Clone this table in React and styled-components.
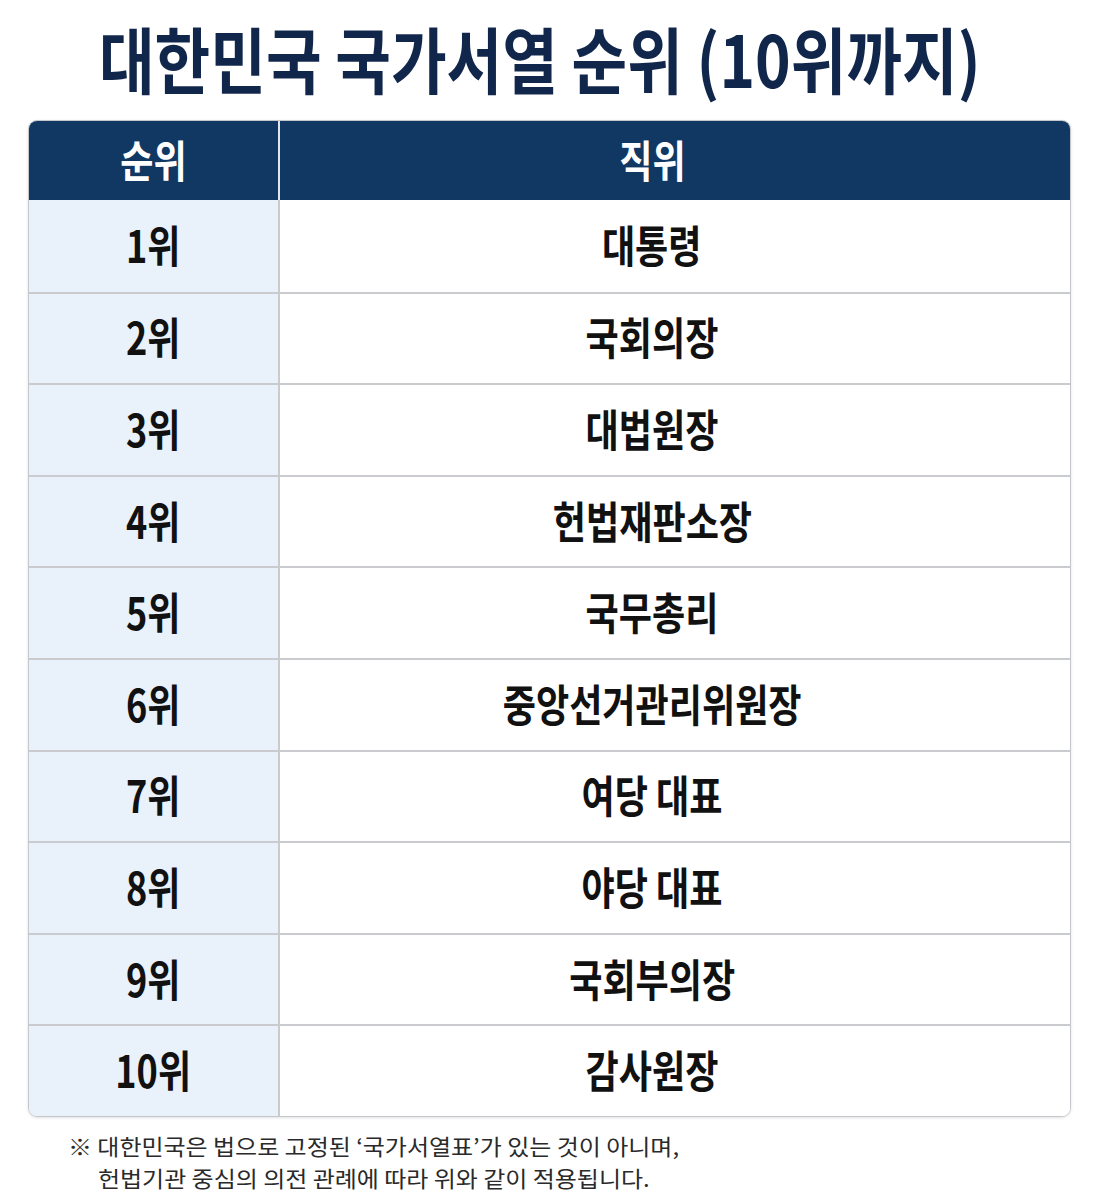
import React from 'react';
import styled, { createGlobalStyle } from 'styled-components';

const Global = createGlobalStyle`
  body {
    margin: 0;
    background: #ffffff;
    font-family: "Noto Sans CJK KR", "Noto Sans", sans-serif;
  }
`;

const Page = styled.div`
  width: 1097px;
  height: 1200px;
  box-sizing: border-box;
  padding: 14px 26px 0 28px;
  display: flex;
  flex-direction: column;
`;

// the source uses a narrow gothic face, so squeeze the text horizontally
const Squeeze = styled.span`
  display: inline-block;
  flex-shrink: 0;
  white-space: pre;
  transform: scaleX(${p => p.$x || 0.82});
  transform-origin: ${p => p.$origin || 'center'};
`;

const Title = styled.h1`
  margin: 0;
  height: 106px;
  padding-right: 20px;
  display: flex;
  justify-content: center;
  font-size: 72px;
  font-weight: 700;
  line-height: 86px;
  color: #10264a;
`;

const Table = styled.div`
  border: 1.5px solid #c4c7cc;
  border-radius: 9px;
  overflow: hidden;
  box-shadow: 0 1px 3px rgba(0, 0, 0, 0.12);
`;

const Row = styled.div`
  display: grid;
  grid-template-columns: 249px 1fr;
  box-sizing: border-box;
  height: ${p => (p.$head ? 79 : 91.6)}px;
  border-top: ${p => (p.$first ? 'none' : '2px solid #c9cbcf')};
`;

const Cell = styled.div`
  display: flex;
  align-items: center;
  justify-content: center;
  font-weight: 700;
  font-size: 44px;
  color: ${p => (p.$head ? '#ffffff' : '#111111')};
  background: ${p => (p.$head ? '#113863' : p.$rank ? '#e9f1fb' : '#ffffff')};
  border-left: ${p => (p.$rank ? 'none' : p.$head ? '2px solid #dfe6ef' : '2px solid #c9cbcf')};
  padding: 0 ${p => (p.$rank ? 0 : 46)}px 4px 0;
  box-sizing: border-box;
`;

const Note = styled.div`
  margin: 12px 0 0 40px;
  font-size: 22px;
  line-height: 32px;
  color: #2a2a2a;
`;

const NoteLine = styled.div`
  padding-left: ${p => p.$indent || 0}px;
`;

const rows = [
  ['1위', '대통령'],
  ['2위', '국회의장'],
  ['3위', '대법원장'],
  ['4위', '헌법재판소장'],
  ['5위', '국무총리'],
  ['6위', '중앙선거관리위원장'],
  ['7위', '여당 대표'],
  ['8위', '야당 대표'],
  ['9위', '국회부의장'],
  ['10위', '감사원장'],
];

export default function App() {
  return (
    <Page>
      <Global />
      <Title>
        <Squeeze $x={0.84}>대한민국 국가서열 순위 (10위까지)</Squeeze>
      </Title>
      <Table>
        <Row $head $first>
          <Cell $head $rank><Squeeze>순위</Squeeze></Cell>
          <Cell $head><Squeeze>직위</Squeeze></Cell>
        </Row>
        {rows.map(([rank, title], i) => (
          <Row key={rank} $first={i === 0}>
            <Cell $rank><Squeeze>{rank}</Squeeze></Cell>
            <Cell><Squeeze>{title}</Squeeze></Cell>
          </Row>
        ))}
      </Table>
      <Note>
        <NoteLine>
          <Squeeze $x={1.09} $origin="left">※ 대한민국은 법으로 고정된 ‘국가서열표’가 있는 것이 아니며,</Squeeze>
        </NoteLine>
        <NoteLine $indent={30}>
          <Squeeze $x={1.09} $origin="left">헌법기관 중심의 의전 관례에 따라 위와 같이 적용됩니다.</Squeeze>
        </NoteLine>
      </Note>
    </Page>
  );
}
